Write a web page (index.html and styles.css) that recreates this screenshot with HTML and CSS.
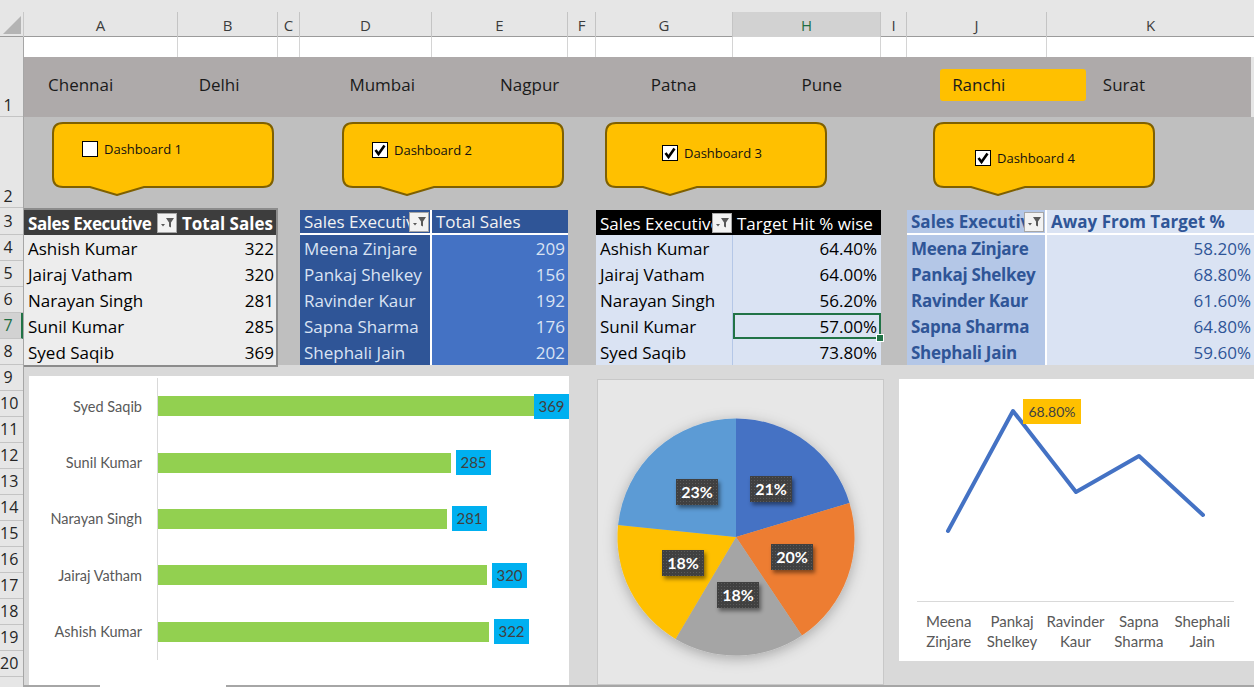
FILE: index.html
```html
<!DOCTYPE html>
<html lang="en">
<head>
<meta charset="utf-8">
<title>Sales Dashboard</title>
<link rel="stylesheet" href="styles.css">
</head>
<body>
<div class="app">
  <div class="topstrip"></div>
  <div class="colheads">
    <div class="corner"><svg width="24" height="25" viewBox="0 0 24 25"><polygon points="3,22 21,4 21,22" fill="#b4b4b4"/></svg></div>
    <div class="ch">A</div><div class="ch">B</div><div class="ch">C</div><div class="ch">D</div><div class="ch">E</div><div class="ch">F</div><div class="ch">G</div><div class="ch ch-active">H</div><div class="ch">I</div><div class="ch">J</div><div class="ch ch-last">K</div>
  </div>
  <div class="sheet">
    <div class="rowheads">
      <div class="rh rh-1"><span>1</span></div>
      <div class="rh rh-2"><span>2</span></div>
      <div class="rh rh-3"><span>3</span></div>
      <div class="rh"><span>4</span></div>
      <div class="rh"><span>5</span></div>
      <div class="rh"><span>6</span></div>
      <div class="rh rh-active"><span>7</span></div>
      <div class="rh"><span>8</span></div>
      <div class="rh"><span>9</span></div>
      <div class="rh"><span>10</span></div>
      <div class="rh"><span>11</span></div>
      <div class="rh"><span>12</span></div>
      <div class="rh"><span>13</span></div>
      <div class="rh"><span>14</span></div>
      <div class="rh"><span>15</span></div>
      <div class="rh"><span>16</span></div>
      <div class="rh"><span>17</span></div>
      <div class="rh"><span>18</span></div>
      <div class="rh"><span>19</span></div>
      <div class="rh"><span>20</span></div>
      <div class="rh rh-last"></div>
    </div>

    <div class="content">
      <div class="row1">
        <div class="gridstrip">
          <div class="gc"></div><div class="gc"></div><div class="gc"></div><div class="gc"></div><div class="gc"></div><div class="gc"></div><div class="gc"></div><div class="gc"></div><div class="gc"></div><div class="gc"></div><div class="gc gc-last"></div>
        </div>
        <div class="slicer">
          <div class="sl-item">Chennai</div>
          <div class="sl-item">Delhi</div>
          <div class="sl-item">Mumbai</div>
          <div class="sl-item">Nagpur</div>
          <div class="sl-item">Patna</div>
          <div class="sl-item">Pune</div>
          <div class="sl-item sl-selected">Ranchi</div>
          <div class="sl-item">Surat</div>
        </div>
      </div>

      <div class="row2">
        <div class="callout co-1">
          <svg class="co-shape" width="222" height="74" viewBox="0 0 222 74"><path d="M11,1 H211 Q221,1 221,11 V55 Q221,65 211,65 H92 L65,73 L38,65 H11 Q1,65 1,55 V11 Q1,1 11,1 Z" fill="#ffc000" stroke="#7f6000" stroke-width="2"/></svg>
          <div class="co-body"><span class="cb"></span><span class="co-label">Dashboard 1</span></div>
        </div>
        <div class="callout co-2">
          <svg class="co-shape" width="222" height="74" viewBox="0 0 222 74"><path d="M11,1 H211 Q221,1 221,11 V55 Q221,65 211,65 H92 L65,73 L38,65 H11 Q1,65 1,55 V11 Q1,1 11,1 Z" fill="#ffc000" stroke="#7f6000" stroke-width="2"/></svg>
          <div class="co-body"><span class="cb"><svg width="14" height="14" viewBox="0 0 14 14"><path d="M2.5,7 L5.5,11 L11.5,2.5" fill="none" stroke="#000" stroke-width="2.6"/></svg></span><span class="co-label">Dashboard 2</span></div>
        </div>
        <div class="callout co-3">
          <svg class="co-shape" width="222" height="74" viewBox="0 0 222 74"><path d="M11,1 H211 Q221,1 221,11 V55 Q221,65 211,65 H92 L65,73 L38,65 H11 Q1,65 1,55 V11 Q1,1 11,1 Z" fill="#ffc000" stroke="#7f6000" stroke-width="2"/></svg>
          <div class="co-body"><span class="cb"><svg width="14" height="14" viewBox="0 0 14 14"><path d="M2.5,7 L5.5,11 L11.5,2.5" fill="none" stroke="#000" stroke-width="2.6"/></svg></span><span class="co-label">Dashboard 3</span></div>
        </div>
        <div class="callout co-4">
          <svg class="co-shape" width="222" height="74" viewBox="0 0 222 74"><path d="M11,1 H211 Q221,1 221,11 V55 Q221,65 211,65 H92 L65,73 L38,65 H11 Q1,65 1,55 V11 Q1,1 11,1 Z" fill="#ffc000" stroke="#7f6000" stroke-width="2"/></svg>
          <div class="co-body"><span class="cb"><svg width="14" height="14" viewBox="0 0 14 14"><path d="M2.5,7 L5.5,11 L11.5,2.5" fill="none" stroke="#000" stroke-width="2.6"/></svg></span><span class="co-label">Dashboard 4</span></div>
        </div>
      </div>

      <div class="tables">
        <div class="tbl t1">
          <div class="th th-name"><span class="th-text">Sales Executive</span><span class="fbtn"><svg width="17" height="17" viewBox="0 0 17 17"><path d="M7,4 H15 L12,8.5 V13.5 L10,12.5 V8.5 Z" fill="#595959"/><path d="M2,10 H6 L4,12.5 Z" fill="#595959"/></svg></span></div>
          <div class="th th-val">Total Sales</div>
          <div class="td name">Ashish Kumar</div><div class="td num">322</div>
          <div class="td name">Jairaj Vatham</div><div class="td num">320</div>
          <div class="td name">Narayan Singh</div><div class="td num">281</div>
          <div class="td name">Sunil Kumar</div><div class="td num">285</div>
          <div class="td name">Syed Saqib</div><div class="td num">369</div>
        </div>

        <div class="tbl t2">
          <div class="th th-name"><span class="th-text">Sales Executive</span><span class="fbtn"><svg width="17" height="17" viewBox="0 0 17 17"><path d="M7,4 H15 L12,8.5 V13.5 L10,12.5 V8.5 Z" fill="#595959"/><path d="M2,10 H6 L4,12.5 Z" fill="#595959"/></svg></span></div>
          <div class="th th-val">Total Sales</div>
          <div class="td name">Meena Zinjare</div><div class="td num">209</div>
          <div class="td name">Pankaj Shelkey</div><div class="td num">156</div>
          <div class="td name">Ravinder Kaur</div><div class="td num">192</div>
          <div class="td name">Sapna Sharma</div><div class="td num">176</div>
          <div class="td name">Shephali Jain</div><div class="td num">202</div>
        </div>

        <div class="tbl t3">
          <div class="th th-name"><span class="th-text">Sales Executive</span><span class="fbtn"><svg width="17" height="17" viewBox="0 0 17 17"><path d="M7,4 H15 L12,8.5 V13.5 L10,12.5 V8.5 Z" fill="#595959"/><path d="M2,10 H6 L4,12.5 Z" fill="#595959"/></svg></span></div>
          <div class="th th-val">Target Hit % wise</div>
          <div class="td name">Ashish Kumar</div><div class="td num">64.40%</div>
          <div class="td name">Jairaj Vatham</div><div class="td num">64.00%</div>
          <div class="td name">Narayan Singh</div><div class="td num">56.20%</div>
          <div class="td name">Sunil Kumar</div><div class="td num sel">57.00%</div>
          <div class="td name">Syed Saqib</div><div class="td num">73.80%</div>
        </div>

        <div class="tbl t4">
          <div class="th th-name"><span class="th-text">Sales Executive</span><span class="fbtn"><svg width="17" height="17" viewBox="0 0 17 17"><path d="M7,4 H15 L12,8.5 V13.5 L10,12.5 V8.5 Z" fill="#595959"/><path d="M2,10 H6 L4,12.5 Z" fill="#595959"/></svg></span></div>
          <div class="th th-val">Away From Target %</div>
          <div class="td name">Meena Zinjare</div><div class="td num">58.20%</div>
          <div class="td name">Pankaj Shelkey</div><div class="td num">68.80%</div>
          <div class="td name">Ravinder Kaur</div><div class="td num">61.60%</div>
          <div class="td name">Sapna Sharma</div><div class="td num">64.80%</div>
          <div class="td name">Shephali Jain</div><div class="td num">59.60%</div>
        </div>
      </div>

      <div class="charts">
        <div class="panel bar-panel">
          <div class="bar-row">
            <div class="bar-cat">Syed Saqib</div>
            <div class="bar-plot"><div class="bar" style="width:376px"></div><div class="bar-val bar-val-edge">369</div></div>
          </div>
          <div class="bar-row">
            <div class="bar-cat">Sunil Kumar</div>
            <div class="bar-plot"><div class="bar" style="width:293px"></div><div class="bar-val">285</div></div>
          </div>
          <div class="bar-row">
            <div class="bar-cat">Narayan Singh</div>
            <div class="bar-plot"><div class="bar" style="width:289px"></div><div class="bar-val">281</div></div>
          </div>
          <div class="bar-row">
            <div class="bar-cat">Jairaj Vatham</div>
            <div class="bar-plot"><div class="bar" style="width:329px"></div><div class="bar-val">320</div></div>
          </div>
          <div class="bar-row">
            <div class="bar-cat">Ashish Kumar</div>
            <div class="bar-plot"><div class="bar" style="width:331px"></div><div class="bar-val">322</div></div>
          </div>
        </div>

        <div class="panel pie-panel">
          <svg class="pie" width="285" height="304" viewBox="0 0 285 304">
            <defs>
              <filter id="pieShadow" x="-20%" y="-20%" width="140%" height="140%">
                <feDropShadow dx="0" dy="3" stdDeviation="7" flood-color="#000" flood-opacity="0.28"/>
              </filter>
            </defs>
            <g filter="url(#pieShadow)">
              <path d="M138,157 L138,38.5 A118.5,118.5 0 0 1 251.5,122.9 Z" fill="#4472c4"/>
              <path d="M138,157 L251.5,122.9 A118.5,118.5 0 0 1 203.9,255.5 Z" fill="#ed7d31"/>
              <path d="M138,157 L203.9,255.5 A118.5,118.5 0 0 1 77.5,258.9 Z" fill="#a5a5a5"/>
              <path d="M138,157 L77.5,258.9 A118.5,118.5 0 0 1 20.1,145 Z" fill="#ffc000"/>
              <path d="M138,157 L20.1,145 A118.5,118.5 0 0 1 138,38.5 Z" fill="#5b9bd5"/>
            </g>
          </svg>
          <div class="pie-lbl" style="left:152px;top:96px">21%</div>
          <div class="pie-lbl" style="left:173px;top:164px">20%</div>
          <div class="pie-lbl" style="left:119px;top:202px">18%</div>
          <div class="pie-lbl" style="left:64px;top:170px">18%</div>
          <div class="pie-lbl" style="left:78px;top:99px">23%</div>
        </div>

        <div class="panel line-panel">
          <svg class="line-plot" width="355" height="224" viewBox="0 0 355 224">
            <line x1="18" y1="222.5" x2="335" y2="222.5" stroke="#d9d9d9" stroke-width="1"/>
            <polyline points="49,152 114,32 177,113 240,77 304,136" fill="none" stroke="#4472c4" stroke-width="4" stroke-linejoin="round" stroke-linecap="round"/>
          </svg>
          <div class="line-tag">68.80%</div>
          <div class="line-cats">
            <div class="line-cat">Meena<br>Zinjare</div>
            <div class="line-cat">Pankaj<br>Shelkey</div>
            <div class="line-cat">Ravinder<br>Kaur</div>
            <div class="line-cat">Sapna<br>Sharma</div>
            <div class="line-cat">Shephali<br>Jain</div>
          </div>
        </div>
      </div>
      <div class="bottombar"><div class="tab"></div></div>
    </div>
  </div>
</div>
</body>
</html>
```

FILE: styles.css
```css
* { box-sizing: border-box; }

html, body {
  margin: 0;
  padding: 0;
  background: #e6e6e6;
}

.app {
  width: 1254px;
  height: 687px;
  overflow: hidden;
  font-family: "Open Sans", "Noto Sans", sans-serif;
}

.topstrip {
  height: 12px;
  background: #e6e6e6;
}

/* column headers */
.colheads {
  display: grid;
  grid-template-columns: 24px 154px 100px 22px 132px 136px 28px 137px 148px 26px 140px 207px;
  height: 25px;
  background: #e6e6e6;
  border-bottom: 1px solid #9b9b9b;
}
.corner {
  border-right: 1px solid #c8c8c8;
}
.corner svg { display: block; }
.ch {
  border-right: 1px solid #c4c4c4;
  text-align: center;
  font-size: 15px;
  line-height: 26px;
  color: #3c3c3c;
}
.ch-active {
  background: #d2d2d2;
  color: #1f6e43;
  border-bottom: 2px solid #217346;
}
.ch-last { border-right: none; }

/* sheet */
.sheet {
  display: flex;
  height: 650px;
}
.rowheads {
  width: 24px;
  flex: none;
  background: #e6e6e6;
  border-right: 1px solid #a6a6a6;
}
.rh {
  height: 26px;
  border-bottom: 1px solid #c4c4c4;
  display: flex;
  align-items: flex-end;
  font-size: 16px;
  line-height: 22px;
  padding-bottom: 2px;
  color: #262626;
}
.rh span {
  display: block;
  width: 16px;
  text-align: center;
  white-space: nowrap;
}
.rh-1 { height: 80px; padding-bottom: 0; }
.rh-2 { height: 91px; padding-bottom: 0; }
.rh-3 { height: 27px; }
.rh-active {
  background: #d2d2d2;
  color: #1f6e43;
  border-right: 2px solid #217346;
}
.rh-last { height: 20px; border-bottom: none; }

.content {
  width: 1230px;
  flex: none;
}

/* row 1 */
.row1 { height: 80px; }
.gridstrip {
  display: grid;
  grid-template-columns: 154px 100px 22px 132px 136px 28px 137px 148px 26px 140px 207px;
  height: 20px;
  background: #ffffff;
}
.gc { border-right: 1px solid #d4d4d4; }
.gc-last { border-right: none; }

.slicer {
  height: 60px;
  width: 1227px;
  background: #aeaaaa;
  display: grid;
  grid-template-columns: repeat(8, 150.7px);
  padding: 12px 0 0 12px;
}
.sl-item {
  width: 146px;
  height: 32px;
  padding-left: 12px;
  font-size: 17px;
  line-height: 32px;
  color: #1a1a1a;
  border-radius: 3px;
}
.sl-selected { background: #ffc000; }

/* row 2 callouts */
.row2 {
  height: 91px;
  background: #bfbfbf;
  display: flex;
  align-items: flex-start;
  padding-top: 5px;
}
.callout {
  position: relative;
  width: 222px;
  height: 74px;
  flex: none;
}
.co-shape {
  position: absolute;
  left: 0;
  top: 0;
}
.co-body {
  position: relative;
  display: flex;
  align-items: center;
  gap: 6px;
  font-size: 13px;
  color: #111;
}
.co-1 { margin-left: 28px; }
.co-1 .co-body { padding: 19px 0 0 30px; }
.co-2 { margin-left: 68px; }
.co-2 .co-body { padding: 20px 0 0 30px; }
.co-3 { margin-left: 41px; }
.co-3 .co-body { padding: 23px 0 0 57px; }
.co-4 { margin-left: 106px; }
.co-4 .co-body { padding: 28px 0 0 42px; }
.cb {
  width: 16px;
  height: 16px;
  border: 1px solid #000;
  background: #fff;
  display: flex;
  align-items: center;
  justify-content: center;
  flex: none;
}
.cb svg { display: block; }
.co-label { line-height: 16px; }

/* tables */
.tables {
  height: 157px;
  background: #bfbfbf;
  display: grid;
  grid-template-columns: 254px 22px 268px 28px 285px 26px 347px;
  align-items: start;
}
.tbl {
  display: grid;
  grid-template-rows: 25px repeat(5, 26px);
  font-family: "Open Sans", "Noto Sans", sans-serif;
  font-size: 17px;
  margin-top: 2px;
}
.th, .td {
  white-space: nowrap;
  overflow: hidden;
}
.th {
  display: flex;
  align-items: center;
  line-height: 25px;
  padding-top: 1px;
}
.th-name { padding-left: 4px; }
.th-text {
  flex: 1;
  overflow: hidden;
  white-space: nowrap;
}
.th-val { padding-left: 4px; }
.td { line-height: 25px; padding-top: 1px; }
.td.name { padding-left: 4px; }
.td.num { text-align: right; padding-right: 4px; }
.fbtn {
  width: 20px;
  height: 20px;
  flex: none;
  margin-right: 1px;
  margin-top: -1px;
  background: #f2f2f2;
  border: 1px solid #a6a6a6;
  display: flex;
  align-items: center;
  justify-content: center;
}
.fbtn svg { display: block; }

.t1 {
  grid-column: 1;
  grid-template-columns: 154px 98px;
  margin-top: 0;
  border-top: 2px solid #8c8c8c;
  border-right: 2px solid #8c8c8c;
  border-bottom: 2px solid #8c8c8c;
  background: #ededed;
  color: #000;
}
.t1 .th { background: #3d3d3d; color: #fff; font-weight: 700; }
.t1 .th-name .th-text { letter-spacing: -0.4px; }
.t1 .td.num { padding-right: 2px; }

.t2 {
  grid-column: 3;
  grid-template-columns: 132px 136px;
  color: #dae3f3;
}
.t2 .th { background: #2f5597; color: #f2f2f2; border-bottom: 2px solid #fff; line-height: 22px; }
.t2 .th-name, .t2 .td.name { border-right: 2px solid #fff; }
.t2 .td.name { background: #2f5597; color: #dae3f3; }
.t2 .td.num { background: #4472c4; color: #dae3f3; padding-right: 3px; }

.t3 {
  grid-column: 5;
  grid-template-columns: 137px 148px;
  background: #dae3f3;
  color: #000;
}
.t3 .th { background: #000; color: #fff; }
.t3 .th-val { padding-left: 4px; }
.t3 .td.name { border-right: 1px solid #b4c7e7; }
.t3 .td.num { padding-right: 4px; }
.t3 .sel {
  position: relative;
  overflow: visible;
  box-shadow: inset 0 0 0 2px #217346;
}
.t3 .sel::after {
  content: "";
  position: absolute;
  right: -3px;
  bottom: -3px;
  width: 6px;
  height: 6px;
  background: #217346;
  border: 1px solid #fff;
}

.t4 {
  grid-column: 7;
  grid-template-columns: 140px 207px;
  color: #2f5597;
}
.t4 .th { border-bottom: 2px solid #fff; line-height: 22px; font-weight: 700; }
.t4 .th-name { background: #b4c7e7; border-right: 2px solid #fff; }
.t4 .th-val { background: #dae3f3; }
.t4 .td.name { background: #b4c7e7; border-right: 2px solid #fff; font-weight: 700; letter-spacing: -0.3px; }
.t4 .td.num { background: #dae3f3; padding-right: 3px; }

/* charts */
.charts {
  height: 320px;
  background: #d9d9d9;
  display: flex;
  align-items: flex-start;
}
.panel { flex: none; }

.bar-panel {
  width: 540px;
  height: 309px;
  margin: 11px 0 0 5px;
  background: #fff;
  padding-top: 2px;
  font-family: Lato, "Open Sans", sans-serif;
}
.bar-row {
  display: grid;
  grid-template-columns: 128px 1fr;
  height: 56.4px;
}
.bar-cat {
  text-align: right;
  padding-right: 15px;
  font-size: 14.5px;
  color: #595959;
  align-self: center;
}
.bar-plot {
  border-left: 1px solid #d9d9d9;
  display: flex;
  align-items: center;
}
.bar {
  height: 20px;
  background: #92d050;
}
.bar-val {
  width: 35px;
  height: 25px;
  margin-left: 5px;
  background: #00b0f0;
  color: #404040;
  font-size: 15px;
  line-height: 25px;
  text-align: center;
}
.bar-val-edge { margin-left: 0; }

.pie-panel {
  position: relative;
  width: 287px;
  height: 306px;
  margin: 14px 0 0 28px;
  background: #e7e7e7;
  border: 1px solid #c8c8c8;
}
.pie { display: block; }
.pie-lbl {
  position: absolute;
  width: 42px;
  height: 26px;
  background-color: #404040;
  background-image: radial-gradient(circle, #5a5a5a 0.6px, transparent 0.9px);
  background-size: 3px 3px;
  color: #fff;
  font-family: Lato, "Open Sans", sans-serif;
  font-weight: 700;
  font-size: 16px;
  line-height: 26px;
  text-align: center;
  box-shadow: 2px 3px 4px rgba(0, 0, 0, 0.45);
}

.line-panel {
  position: relative;
  width: 355px;
  height: 282px;
  margin: 14px 0 0 15px;
  background: #fff;
  font-family: Lato, "Open Sans", sans-serif;
}
.line-plot { display: block; }
.line-tag {
  position: absolute;
  left: 124px;
  top: 20px;
  width: 58px;
  height: 25px;
  background: #ffc000;
  color: #404040;
  font-size: 14px;
  line-height: 25px;
  text-align: center;
}
.line-cats {
  display: grid;
  grid-template-columns: repeat(5, 63.4px);
  padding: 8px 0 0 18px;
}
.line-cat {
  text-align: center;
  font-size: 15px;
  line-height: 20px;
  color: #595959;
}

.bottombar {
  height: 2px;
  background: #a6a6a6;
  padding-left: 76px;
}
.tab {
  width: 126px;
  height: 2px;
  background: #ffffff;
}
```
